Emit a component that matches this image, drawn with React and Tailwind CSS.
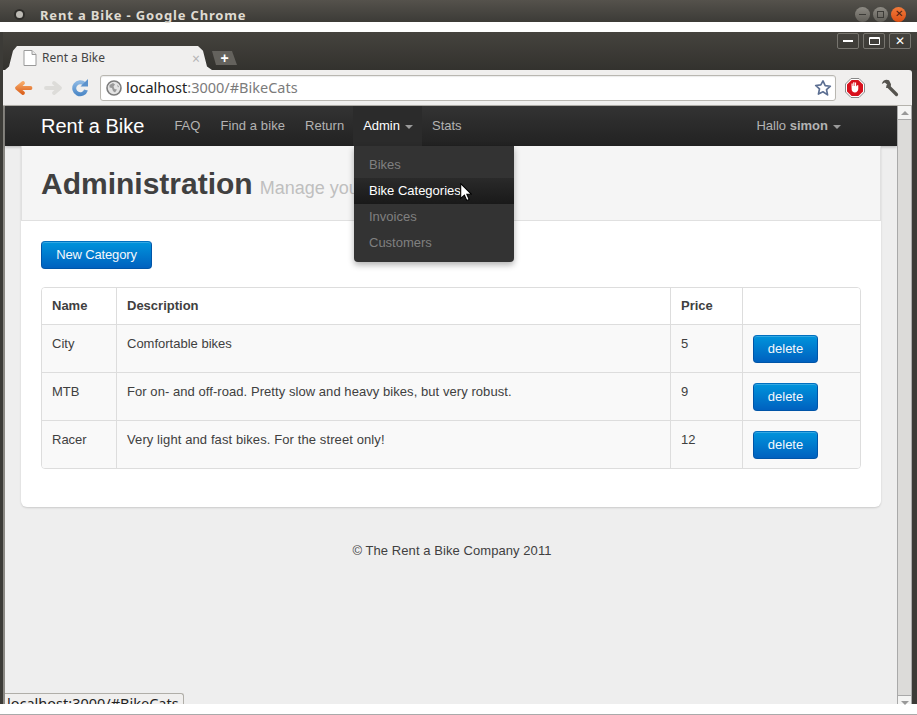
import React from "react";

const Btn = ({ children, className = "" }) => (
  <button className={`h-[28px] rounded-[4px] border border-[#0055a8] border-t-[#0070c0] bg-gradient-to-b from-[#0094dc] to-[#0061bf] text-[13px] leading-[18px] text-[#f4f8fc] shadow-[inset_0_1px_0_rgba(255,255,255,0.2)] ${className}`}>
    {children}
  </button>
);

const NavLink = ({ children, active, className = "" }) => (
  <div className={`flex h-[40px] items-center pl-[10px] text-[13px] ${active ? "bg-[#2b2b2b] text-white" : "text-[#b3b3b3]"} ${className}`}>{children}</div>
);

const Caret = ({ color = "border-t-[#9a9a9a]" }) => (
  <span className={`ml-[5px] mt-[1px] inline-block h-0 w-0 border-x-[4px] border-t-[4px] border-x-transparent ${color}`} />
);

const Row = ({ name, desc, price, tracking = "" }) => (
  <div className="flex h-[48px] border-t border-[#ddd] bg-[#f9f9f9] text-[13px] leading-[18px] text-[#404040]">
    <div className="w-[74px] px-[10px] pt-[10px]">{name}</div>
    <div className={`w-[554px] border-l border-[#ddd] px-[10px] pt-[10px] ${tracking}`}>{desc}</div>
    <div className="w-[72px] border-l border-[#ddd] px-[10px] pt-[10px]">{price}</div>
    <div className="flex-1 border-l border-[#ddd] px-[10px] pt-[10px]">
      <Btn className="w-[65px]">delete</Btn>
    </div>
  </div>
);

export default function App() {
  const chrome = { fontFamily: '"Noto Sans", "Open Sans", sans-serif' };
  return (
    <div className="relative h-[715px] w-[917px] overflow-hidden bg-white" style={{ fontFamily: '"Liberation Sans", Arial, sans-serif' }}>
      {/* outer OS title bar */}
      <div className="flex h-[22px] items-center bg-gradient-to-b from-[#55524c] to-[#3c3b37] pl-[14px] pr-[5px] pt-[6px]">
        <span className="flex h-[11px] w-[11px] items-center justify-center rounded-full bg-[#2e2d2a]">
          <span className="h-[7px] w-[7px] rounded-full bg-[#bdbbb5]" />
        </span>
        <span className="ml-[15px] mt-[3px] text-[13px] font-bold tracking-[0.83px] text-[#dfdbd2]" style={chrome}>Rent a Bike - Google Chrome</span>
        <div className="ml-auto flex items-center gap-[3px] pr-[6px]">
          <span className="flex h-[15px] w-[15px] items-center justify-center rounded-full bg-gradient-to-b from-[#8e8b84] to-[#5f5d57]"><span className="h-[1px] w-[7px] bg-[#3c3b37]" /></span>
          <span className="flex h-[15px] w-[15px] items-center justify-center rounded-full bg-gradient-to-b from-[#8e8b84] to-[#5f5d57]"><span className="h-[7px] w-[7px] border border-[#3c3b37]" /></span>
          <span className="flex h-[15px] w-[15px] items-center justify-center rounded-full bg-gradient-to-b from-[#f07a3a] to-[#dc4f12] text-[10px] leading-none text-[#4a2010]">✕</span>
        </div>
      </div>
      <div className="h-[10px] bg-white" />

      {/* browser window */}
      <div className="flex h-[672px] flex-col border-l-[3px] border-[#3c3b37] bg-[#3c3b37]">
        {/* tab strip */}
        <div className="flex h-[38px] shrink-0 items-end bg-gradient-to-b from-[#45433e] to-[#33322e] pl-[2px]">
          <div className="flex h-[24px] w-[207px] items-center bg-[#f0efee] pl-[18px] pr-[12px] text-[12px] text-[#444] [clip-path:polygon(0_100%,4px_85%,8px_20%,12px_0,calc(100%-14px)_0,calc(100%-9px)_20%,calc(100%-5px)_85%,100%_100%)]" style={chrome}>
            <svg width="14" height="16" viewBox="0 0 14 16" className="shrink-0">
              <path d="M1 .5h8l4 4v11H1z" fill="#fff" stroke="#9a9a9a" />
              <path d="M9 .5v4h4" fill="#e8e8e8" stroke="#9a9a9a" />
            </svg>
            <span className="ml-[5px]">Rent a Bike</span>
            <span className="ml-auto text-[14px] text-[#b5b5b5]">×</span>
          </div>
          <div className="mb-[5px] flex h-[14px] w-[25px] items-center justify-center bg-[#64625d] text-[14px] font-bold leading-none text-white [clip-path:polygon(0_0,calc(100%-5px)_0,100%_100%,4px_100%)]">+</div>
          <div className="mb-auto ml-auto mr-[6px] mt-[1px] flex gap-[4px]">
            {[
              <span key="a" className="h-[2px] w-[10px] bg-white" />,
              <span key="b" className="h-[8px] w-[11px] rounded-[1px] border border-t-[2px] border-white" />,
              <span key="c" className="text-[12px] leading-none text-white">✕</span>,
            ].map((g, i) => (
              <span key={i} className="flex h-[16px] w-[22px] items-center justify-center rounded-[2px] border border-[#77756f]">{g}</span>
            ))}
          </div>
        </div>

        {/* toolbar */}
        <div className="ml-0 mr-[5px] flex h-[36px] shrink-0 items-center rounded-tr-[3px] border-b border-[#b5b3ad] bg-[#f0efee] pl-[11px]">
          <svg width="20" height="16" viewBox="0 0 20 16">
            <defs>
              <linearGradient id="orangeArrow" x1="0" y1="0" x2="0" y2="1">
                <stop offset="0" stopColor="#f6a765" />
                <stop offset="1" stopColor="#dc6420" />
              </linearGradient>
              <linearGradient id="blueReload" x1="0" y1="0" x2="0" y2="1">
                <stop offset="0" stopColor="#8ab6e2" />
                <stop offset="1" stopColor="#4f8ac8" />
              </linearGradient>
            </defs>
            <path d="M16.5 8H4M9 3 3 8l6 5" fill="none" stroke="url(#orangeArrow)" strokeWidth="3.8" strokeLinecap="round" strokeLinejoin="round" />
          </svg>
          <svg width="20" height="16" viewBox="0 0 20 16" className="ml-[9px]">
            <path d="M3 8h13M11 3l6 5-6 5" fill="none" stroke="#dddcd9" strokeWidth="3.8" strokeLinecap="round" strokeLinejoin="round" />
          </svg>
          <svg width="18" height="18" viewBox="0 0 18 18" className="ml-[9px] mr-[1px]">
            <path d="M12.5 5A6 6 0 1 0 14 11" fill="none" stroke="url(#blueReload)" strokeWidth="4" />
            <path d="M8.5 7.5H16V0z" fill="#5b92cc" />
          </svg>
          <div className="ml-[9px] flex h-[26px] w-[736px] items-center rounded-[3px] border border-[#b9b7b1] bg-white pl-[5px] pr-[3px] shadow-[inset_0_1px_1px_rgba(0,0,0,0.08)]">
            <svg width="16" height="16" viewBox="0 0 16 16">
              <circle cx="8" cy="8" r="7" fill="#e4e4e4" stroke="#7c7c7c" strokeWidth="1.6" />
              <path d="M3.5 5 7 3l2 1.5-1.5 2 1 2.5 2.5.5-2 3-2-1.5-1-3-2.5-.5zM11 4.5l2 2-1 1z" fill="#999" />
            </svg>
            <span className="ml-[4px] text-[14.5px] text-[#222]" style={chrome}>localhost<span className="text-[#7b7b7b]">:3000/#BikeCats</span></span>
            <svg width="18" height="18" viewBox="0 0 24 24" className="ml-auto">
              <path d="M12 2.5l2.9 6.3 6.9.8-5.1 4.7 1.4 6.8L12 17l-6.1 3.1 1.4-6.8-5.1-4.7 6.9-.8z" fill="#fff" stroke="#5c6f92" strokeWidth="2.2" strokeLinejoin="round" />
            </svg>
          </div>
          <svg width="20" height="20" viewBox="0 0 20 20" className="ml-[9px]">
            <path d="M6 .5h8L19.5 6v8L14 19.5H6L.5 14V6z" fill="#fff" stroke="#888" />
            <path d="M6.6 2h6.8L18 6.6v6.8L13.4 18H6.6L2 13.4V6.6z" fill="#d8101c" />
            <path d="M6.5 8V5.5h1.2V8h.5V4.3h1.2V8h.5V4.6h1.2V8.5l1-1.2h1.2v3.5c0 2-1.4 3.7-3.4 3.7-1.8 0-2.7-1-3.2-2.5z" fill="#fff" />
          </svg>
          <svg width="18" height="18" viewBox="0 0 18 18" className="ml-[16px]">
            <path d="M7 7l8.5 8.5" fill="none" stroke="#55534e" strokeWidth="3.2" strokeLinecap="round" />
            <path d="M8 1.2C5.2-.2 1.5 1 .8 5l3-1.5 2.6 2.2-1.5 3c2.6 1 5.6-.4 5-3.6z" fill="#55534e" />
          </svg>
        </div>

        {/* viewport with page and scrollbar */}
        <div className="relative flex min-h-0 flex-1">
          <div className="min-w-0 flex-1 border-l-[2px] border-[#8a8883] bg-[#eeeeee]">
            {/* navbar */}
            <div className="flex h-[40px] items-center bg-gradient-to-b from-[#333333] to-[#222222] pl-[36px] pr-[56px] shadow-[0_1px_3px_rgba(0,0,0,0.25)]">
              <span className="mr-[20px] text-[20px] leading-[20px] text-white">Rent a Bike</span>
              <NavLink className="pr-[10px]">FAQ</NavLink>
              <NavLink className="pr-[10px] tracking-[0.1px]">Find a bike</NavLink>
              <NavLink className="pr-[9px]">Return</NavLink>
              <NavLink active className="pr-[9px]">Admin<Caret color="border-t-[#9a9a9a]" /></NavLink>
              <NavLink className="pr-[10px]">Stats</NavLink>
              <div className="ml-auto flex items-center text-[13px] text-[#b3b3b3]">
                Hallo&nbsp;<b>simon</b><Caret />
              </div>
            </div>

            {/* card */}
            <div className="mx-[16px] rounded-b-[6px] bg-white shadow-[0_1px_2px_rgba(0,0,0,0.15)]">
              <div className="flex h-[75px] items-center gap-[7px] border-x border-b border-[#e0e0e0] bg-[#f5f5f5] pl-[19px] pt-[2px]">
                <h1 className="text-[30px] font-bold leading-[36px] text-[#404040]">Administration</h1>
                <span className="mt-[9px] text-[18px] leading-[27px] text-[#bfbfbf]">Manage your data</span>
              </div>
              <div className="px-[20px] pb-[38px] pt-[20px]">
                <Btn className="block w-[111px] tracking-[-0.15px]">New Category</Btn>
                <div className="mt-[18px] overflow-hidden rounded-[4px] border border-[#ddd]">
                  <div className="flex h-[36px] bg-white text-[13px] font-bold leading-[18px] text-[#404040]">
                    <div className="flex w-[74px] items-center px-[10px]">Name</div>
                    <div className="flex w-[554px] items-center border-l border-[#ddd] px-[10px]">Description</div>
                    <div className="flex w-[72px] items-center border-l border-[#ddd] px-[10px]">Price</div>
                    <div className="flex-1 border-l border-[#ddd]" />
                  </div>
                  <Row name="City" desc="Comfortable bikes" price="5" />
                  <Row name="MTB" desc="For on- and off-road. Pretty slow and heavy bikes, but very robust." price="9" tracking="tracking-[0.06px]" />
                  <Row name="Racer" desc="Very light and fast bikes. For the street only!" price="12" tracking="tracking-[0.1px]" />
                </div>
              </div>
            </div>

            <p className="mt-[35px] pl-[2px] text-center text-[13px] leading-[18px] tracking-[0.07px] text-[#404040]">© The Rent a Bike Company 2011</p>
          </div>

          {/* scrollbar */}
          <div className="flex w-[15px] shrink-0 flex-col border-x border-[#a9a9a9] bg-[#dcdbd9]">
            <div className="flex h-[14px] items-center justify-center border-b border-[#a9a9a9] bg-[#f4f4f3]">
              <span className="h-0 w-0 border-x-[4px] border-b-[4px] border-x-transparent border-b-[#999]" />
            </div>
            <div className="mt-auto flex h-[9px] items-start justify-center border-t border-[#a9a9a9] bg-[#f4f4f3] pt-[5px]">
              <span className="h-0 w-0 border-x-[4px] border-t-[4px] border-x-transparent border-t-[#999]" />
            </div>
          </div>
          <div className="w-[5px] shrink-0 bg-[#3c3b37]" />

          {/* dropdown over the page */}
          <div className="absolute left-[351px] top-[40px] h-[116px] w-[160px] rounded-b-[4px] bg-[#333333] py-[6px] text-[13px] leading-[26px] text-[#808080] shadow-[0_3px_6px_rgba(0,0,0,0.3)]">
            <div className="h-[26px] px-[15px]">Bikes</div>
            <div className="h-[26px] bg-gradient-to-b from-[#2a2a2a] to-[#191919] px-[15px] text-white">Bike Categories</div>
            <div className="h-[26px] px-[15px]">Invoices</div>
            <div className="h-[26px] px-[15px]">Customers</div>
          </div>
          <svg width="12" height="18" viewBox="0 0 11 17" className="absolute left-[457px] top-[77px]">
            <path d="M.5.5v14l3.5-3 2.2 5 2.3-1-2.2-4.8h4.4z" fill="#fff" stroke="#000" strokeWidth="1" />
          </svg>

          {/* status bubble */}
          <div className="absolute bottom-0 left-[2px] h-[11px] w-[179px] overflow-hidden rounded-tr-[3px] border-r border-t border-[#b0aea8] bg-[#f0efee] pl-[2px] text-[14.5px] leading-[19px] text-[#222]" style={chrome}>
            localhost:3000/#BikeCats
          </div>
        </div>
      </div>

      <div className="h-[10px] bg-white" />
      <div className="h-[1px] bg-[#aaa]" />
    </div>
  );
}
